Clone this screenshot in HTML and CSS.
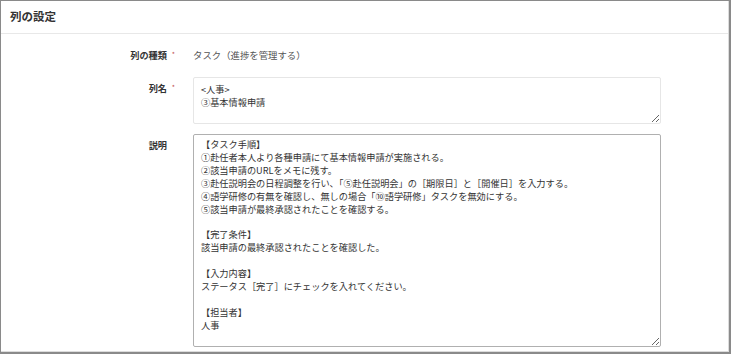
FILE: index.html
```html
<!DOCTYPE html>
<html lang="ja">
<head>
<meta charset="utf-8">
<title>列の設定</title>
<link rel="stylesheet" href="styles.css">
</head>
<body>
<div class="frame">
  <div class="panel-heading">列の設定</div>
  <div class="panel-body">
    <div class="form-row row-static">
      <div class="label">列の種類<span class="req">*</span></div>
      <div class="static">タスク（進捗を管理する）</div>
    </div>
    <div class="form-row">
      <label class="label" for="colname">列名<span class="req">*</span></label>
      <textarea id="colname" class="field field-name">&lt;人事&gt;
③基本情報申請</textarea>
    </div>
    <div class="form-row">
      <label class="label" for="desc">説明</label>
      <textarea id="desc" class="field field-desc">【タスク手順】
①赴任者本人より各種申請にて基本情報申請が実施される。
②該当申請のURLをメモに残す。
③赴任説明会の日程調整を行い、「⑤赴任説明会」の［期限日］と［開催日］を入力する。
④語学研修の有無を確認し、無しの場合「⑩語学研修」タスクを無効にする。
⑤該当申請が最終承認されたことを確認する。

【完了条件】
該当申請の最終承認されたことを確認した。

【入力内容】
ステータス［完了］にチェックを入れてください。

【担当者】
人事</textarea>
    </div>
  </div>
</div>
</body>
</html>
```
FILE: styles.css
```css
html, body {
  margin: 0;
  padding: 0;
  background: #ffffff;
}
body {
  font-family: "Noto Sans CJK JP", "Noto Sans", sans-serif;
  color: #333333;
}
.frame {
  box-sizing: border-box;
  width: 731px;
  height: 354px;
  border: 1px solid #8a8a8a;
  border-bottom-width: 2px;
  border-right-width: 2px;
  box-shadow: inset -1px -1px 0 #dcdcdc;
  overflow: hidden;
  background: #ffffff;
}
.panel-heading {
  box-sizing: border-box;
  height: 33px;
  padding-left: 9px;
  line-height: 31px;
  font-size: 11.5px;
  font-weight: bold;
  color: #333333;
  border-bottom: 1px solid #e8e8e8;
  margin-right: 1px;
}
.panel-body {
  padding-top: 11px;
  display: flex;
  flex-direction: column;
  gap: 10px;
}
.form-row {
  display: grid;
  grid-template-columns: 166px 468px;
  column-gap: 26px;
  align-items: start;
}
.label {
  position: relative;
  text-align: right;
  font-size: 9.2px;
  line-height: 13px;
  font-weight: bold;
  color: #333333;
  padding-top: 5px;
}
.row-static .label {
  padding-top: 4px;
}
.req {
  position: absolute;
  right: -8px;
  top: 7px;
  font-size: 7px;
  line-height: 7px;
  font-weight: normal;
  color: #c05050;
}
.row-static .req {
  top: 6px;
}
.static {
  font-size: 9.4px;
  line-height: 13px;
  padding: 4px 0 5px;
  color: #555555;
}
.field {
  box-sizing: border-box;
  display: block;
  width: 468px;
  margin: 0;
  padding: 5px 7px;
  font-family: "Noto Sans CJK JP", "Noto Sans", sans-serif;
  font-size: 9.2px;
  line-height: 13px;
  color: #333333;
  background: #ffffff;
  border-radius: 2px;
  resize: vertical;
  overflow: hidden;
  outline: none;
}
.field-name {
  height: 47px;
  border: 1px solid #e6e6e6;
}
.field-desc {
  height: 213px;
  border: 1px solid #b0b0b0;
  padding-top: 3px;
  line-height: 12.9px;
}
```
